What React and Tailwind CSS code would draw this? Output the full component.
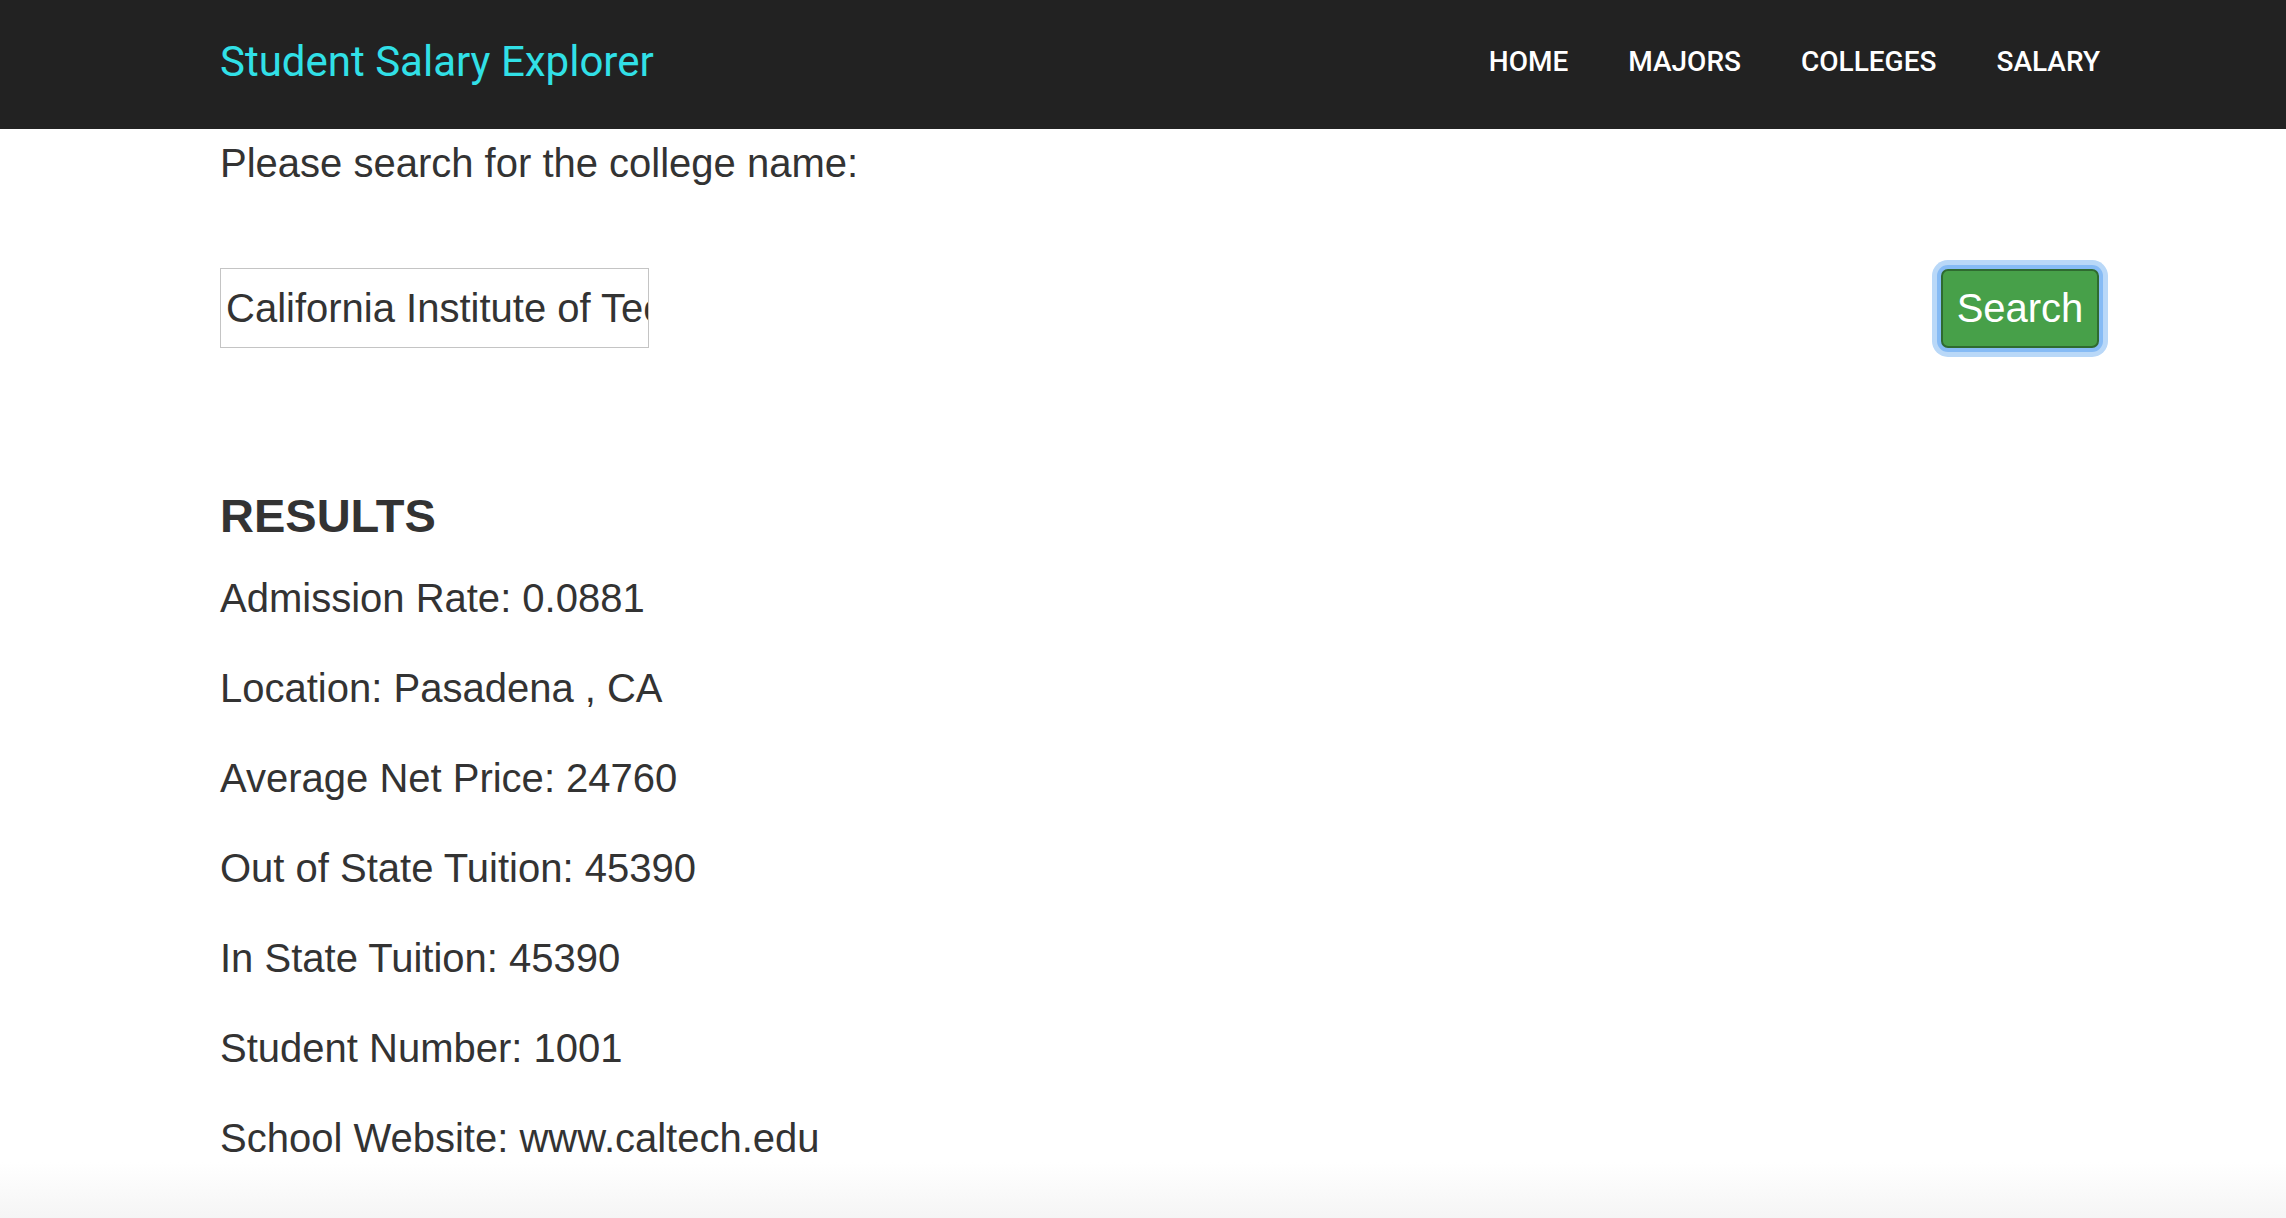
import { useState } from 'react'

const NAV = ['HOME', 'MAJORS', 'COLLEGES', 'SALARY']

const RESULTS = [
  ['Admission Rate', '0.0881'],
  ['Location', 'Pasadena , CA'],
  ['Average Net Price', '24760'],
  ['Out of State Tuition', '45390'],
  ['In State Tuition', '45390'],
  ['Student Number', '1001'],
  ['School Website', 'www.caltech.edu'],
]

export default function App() {
  const [query, setQuery] = useState('California Institute of Technology')

  return (
    <div className="min-h-[1218px] bg-white relative overflow-hidden text-[#333]" style={{ fontFamily: '"Liberation Sans", Arial, sans-serif' }}>
      {/* bottom fade, behind content */}
      <div className="absolute left-0 right-0 bottom-0 h-[56px] bg-gradient-to-b from-white to-[#f5f5f5]" />

      {/* Navbar */}
      <nav className="relative h-[129px] bg-[#222] flex items-center justify-between pl-[220px] pr-[186px] pb-[6px]" style={{ fontFamily: 'Roboto, sans-serif' }}>
        <a className="text-[42px] text-[#31e0e7] leading-none">Student Salary Explorer</a>
        <ul className="flex items-center gap-[60px]">
          {NAV.map(n => (
            <li key={n} className="text-[28px] font-medium text-white leading-none">{n}</li>
          ))}
        </ul>
      </nav>

      <div className="relative pl-[220px] pr-[186px]">
        <p className="mt-[6px] text-[40px] leading-[56px]">Please search for the college name:</p>

        <div className="mt-[77px] flex items-center justify-between">
          <input
            value={query}
            onChange={e => setQuery(e.target.value)}
            className="w-[429px] h-[80px] border border-[#c4c4c4] pl-[5px] pr-0 text-[40px] text-[#333] outline-none"
          />
          <button className="w-[158px] h-[79px] mr-[1px] rounded-[7px] bg-[#47a049] border-2 border-[#2f6a30] text-white text-[40px] leading-none shadow-[0_0_0_4px_#86bbf5,0_0_0_9px_#b9d8f8]">
            Search
          </button>
        </div>

        <h3 className="mt-[140px] text-[47px] font-bold leading-[56px]">RESULTS</h3>

        <div className="mt-[9px]">
          {RESULTS.map(([k, v]) => (
            <p key={k} className="text-[40px] leading-[90px]">{k}: {v}</p>
          ))}
        </div>
      </div>
    </div>
  )
}
